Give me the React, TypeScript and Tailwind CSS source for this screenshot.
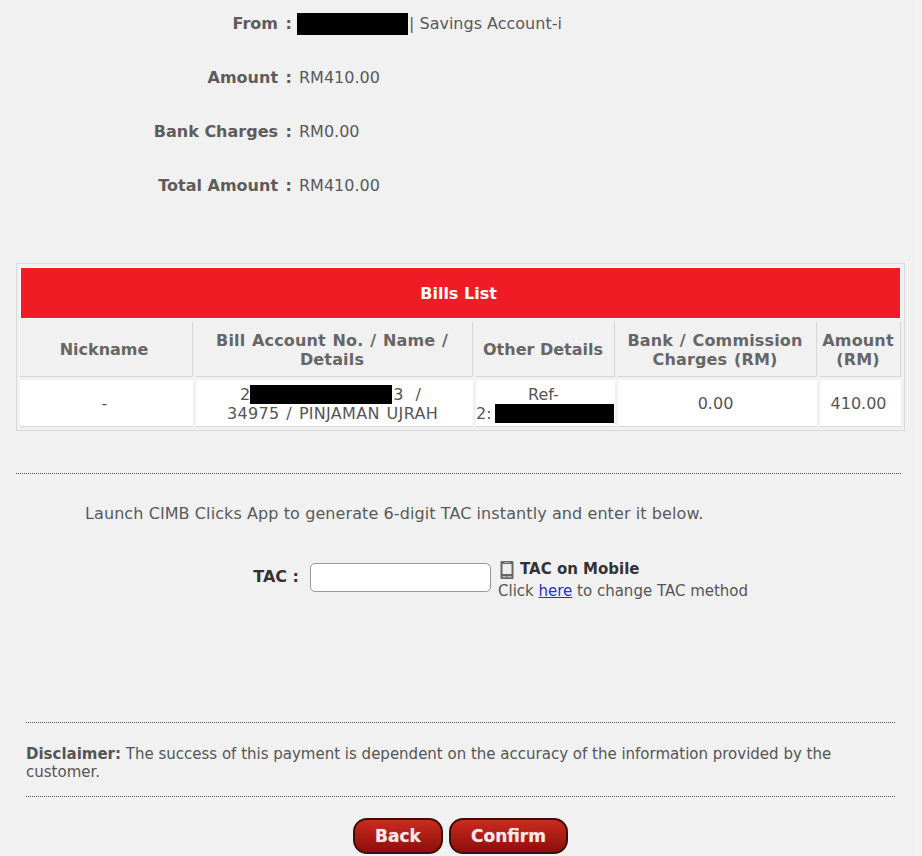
const font = { fontFamily: '"DejaVu Sans", Verdana, sans-serif' };

function Redact({ className }: { className: string }) {
  return <span className={`inline-block bg-black align-top ${className}`} />;
}

function SummaryRow({ label, children }: { label: string; children: React.ReactNode }) {
  return (
    <div className="flex h-[54px] items-start">
      <div className="w-[285px] pr-[1px] text-right font-bold text-[#5f5b5b]">
        {label}
        <span className="[word-spacing:2px]"> :</span>
      </div>
      <div className="ml-[6px] flex text-[#595959]">{children}</div>
    </div>
  );
}

const thBase = "border-r border-b border-[#d6d6d6] bg-[#f1f1f1] pl-0 pr-1 text-center align-middle font-bold leading-[19px] text-[#666]";
const th = `${thBase} pt-[2px] tracking-[0.15px] [word-spacing:1px]`;
const thOne = `${thBase} pt-0`;
const td = "border-b border-[#d6d6d6] bg-white pl-0 pr-1 pt-[2px] pb-0 text-center align-middle leading-[19px] text-[#555]";
const tdOne = "border-b border-[#d6d6d6] bg-white pl-0 pr-1 pt-0 pb-0 text-center align-middle leading-[19px] text-[#555]";

function BillsTable() {
  return (
    <table className="ml-[8px] w-[889px] table-fixed border-separate border-spacing-[3px] border border-[#d9d9d9]">
      <colgroup>
        <col className="w-[173px]" />
        <col className="w-[277px]" />
        <col className="w-[139px]" />
        <col className="w-[199px]" />
        <col className="w-[81px]" />
      </colgroup>
      <thead>
        <tr className="h-[52px]">
          <th colSpan={5} className="border border-white bg-[#ef1c25] pt-[2px] pr-1 text-center font-bold text-white">
            Bills List
          </th>
        </tr>
        <tr className="h-[55px]">
          <th className={thOne}>Nickname</th>
          <th className={th}>Bill Account No. / Name / Details</th>
          <th className={thOne}>Other Details</th>
          <th className={th}>Bank / Commission Charges (RM)</th>
          <th className={th}>Amount (RM)</th>
        </tr>
      </thead>
      <tbody>
        <tr className="h-[47px]">
          <td className={tdOne}>-</td>
          <td className={td}>
            <div className="flex justify-center pr-[4px] [word-spacing:1px]">
              <span>2</span>
              <Redact className="h-[19px] w-[142px]" />
              <span className="ml-[1px] whitespace-pre">3  /</span>
            </div>
            <div className="tracking-[0.3px] [word-spacing:1.5px]">34975 / PINJAMAN UJRAH</div>
          </td>
          <td className="border-b border-[#d6d6d6] bg-white p-0 pt-[2px] text-center align-middle leading-[19px] text-[#555]">
            <div className="pr-1">Ref-</div>
            <div className="flex text-left">
              <span>2:</span>
              <Redact className="ml-[3px] h-[19px] w-[119px]" />
            </div>
          </td>
          <td className={tdOne}>0.00</td>
          <td className={tdOne}>410.00</td>
        </tr>
      </tbody>
    </table>
  );
}

function PhoneIcon() {
  return (
    <svg width="15" height="18" viewBox="0 0 15 18" className="ml-[2px] mr-[5px] mt-[2px] shrink-0">
      <rect x="0.5" y="0" width="13" height="18" rx="1" fill="#666" />
      <rect x="4" y="1" width="6" height="1" fill="#aaa" />
      <rect x="2.5" y="3" width="9" height="10" fill="#eee" />
      <rect x="2.5" y="15" width="4" height="1.5" fill="#bbb" />
      <rect x="7.5" y="15" width="4" height="1.5" fill="#bbb" />
    </svg>
  );
}

function RedButton({ label, className }: { label: string; className: string }) {
  return (
    <button
      className={`h-[36px] rounded-[14px] border-2 border-[#3c0f0c] bg-gradient-to-b from-[#cc2a20] to-[#8c0f0a] pt-[2px] text-center text-[17px] font-bold text-[#f6e9e8] [text-shadow:0_0_1px_rgba(255,255,255,0.5)] ${className}`}
    >
      {label}
    </button>
  );
}

export default function App() {
  return (
    <div className="h-[856px] overflow-hidden bg-[#f2f2f2] text-[16px]" style={font}>
      <div className="ml-[8px] h-[856px] w-[907px] bg-[#f1f1f1] pt-[12px]">
        <SummaryRow label="From">
          <Redact className="-ml-[2px] mt-px h-[22px] w-[111px]" />
          <span className="ml-px">| Savings Account-i</span>
        </SummaryRow>
        <SummaryRow label="Amount">RM410.00</SummaryRow>
        <SummaryRow label="Bank Charges">RM0.00</SummaryRow>
        <SummaryRow label="Total Amount">RM410.00</SummaryRow>

        <div className="mt-[35px]">
          <BillsTable />
        </div>

        <div className="ml-[8px] mt-[42px] w-[885px] border-t border-dotted border-[#555]" />
        <p className="ml-[77px] mt-[28px] tracking-[0.09px] text-[#595959]">
          Launch CIMB Clicks App to generate 6-digit TAC instantly and enter it below.
        </p>

        <div className="mt-[31px] flex h-[165px] items-start">
          <div className="mt-[8px] w-[291px] text-right font-bold text-[#333]">TAC :</div>
          <input
            type="text"
            className="ml-[11px] mt-[6px] h-[29px] w-[181px] rounded-[5px] border border-[#999] bg-white"
          />
          <div className="ml-[7px] mt-[1px] text-[15px]">
            <div className="flex h-[22px] items-center font-bold text-[#333]">
              <PhoneIcon />
              TAC on Mobile
            </div>
            <div className="leading-[22px] text-[#555]">
              Click <a className="text-[#2a2ae0] underline">here</a> to change TAC method
            </div>
          </div>
        </div>

        <div className="ml-[18px] w-[869px] border-t border-dotted border-[#555]" />
        <p className="ml-[18px] mt-[22px] w-[869px] text-[15px] leading-[18px] text-[#555]">
          <b>Disclaimer:</b> The success of this payment is dependent on the accuracy of the information provided by the customer.
        </p>
        <div className="ml-[18px] mt-[15px] w-[869px] border-t border-dotted border-[#555]" />

        <div className="ml-[345px] mt-[21px] flex gap-[6px]">
          <RedButton label="Back" className="w-[90px]" />
          <RedButton label="Confirm" className="w-[119px]" />
        </div>
      </div>
    </div>
  );
}
